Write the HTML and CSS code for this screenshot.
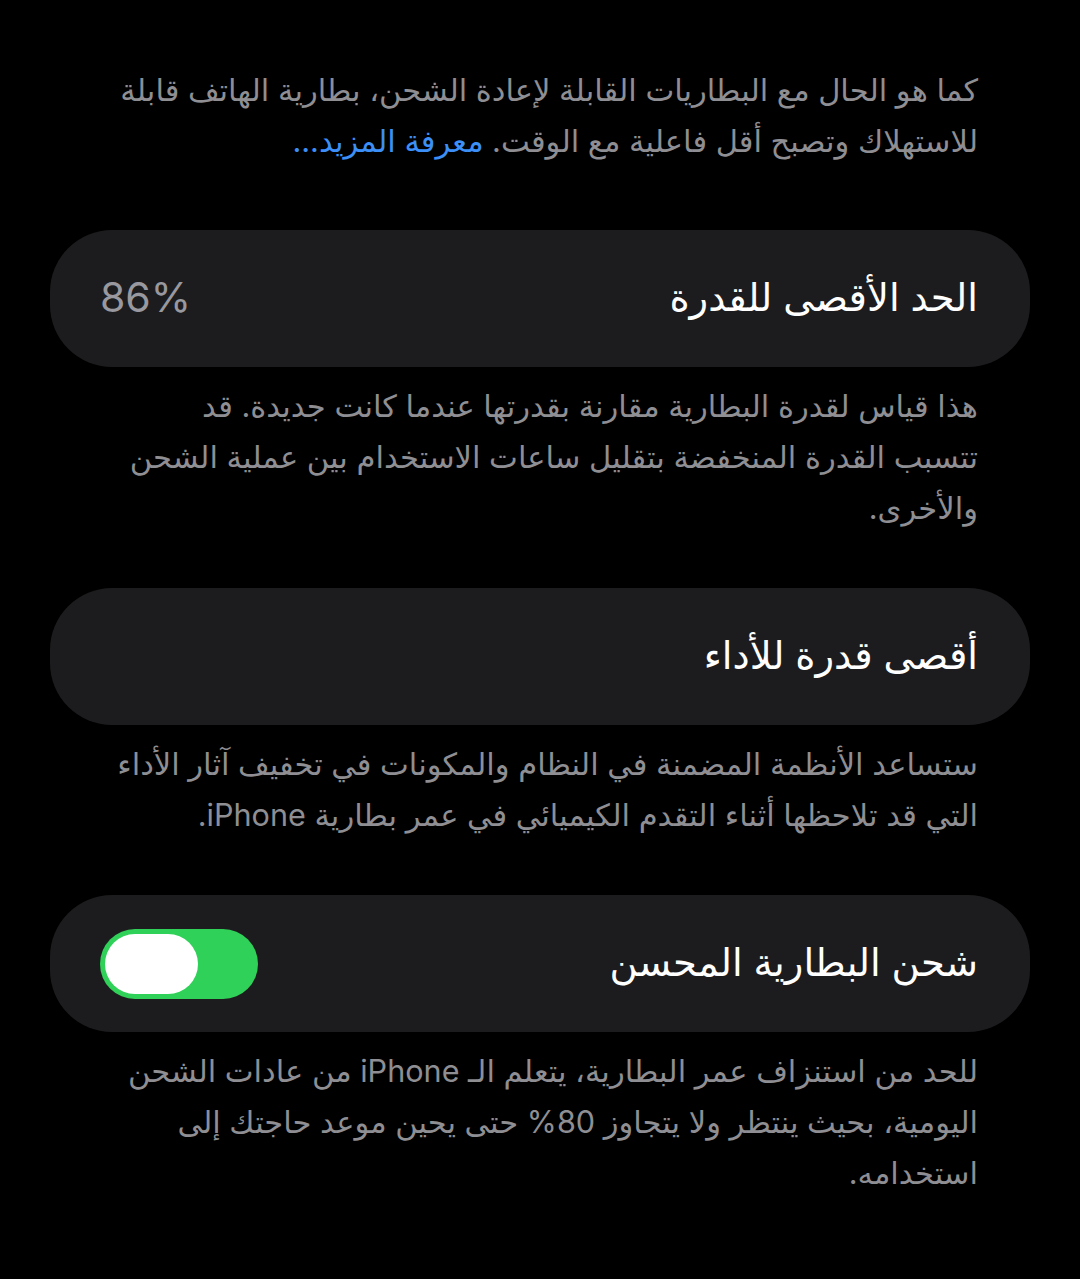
FILE: index.html
```html
<!DOCTYPE html>
<html lang="ar" dir="rtl">
<head>
<meta charset="utf-8">
<link rel="stylesheet" href="styles.css">
</head>
<body>
<main class="page">
  <p class="note note-top">كما هو الحال مع البطاريات القابلة لإعادة الشحن، بطارية الهاتف قابلة<br>للاستهلاك وتصبح أقل فاعلية مع الوقت. <span class="link">معرفة المزيد...</span></p>

  <div class="card">
    <span class="card-title">الحد الأقصى للقدرة</span>
    <span class="card-value">86%</span>
  </div>
  <p class="note">هذا قياس لقدرة البطارية مقارنة بقدرتها عندما كانت جديدة. قد<br>تتسبب القدرة المنخفضة بتقليل ساعات الاستخدام بين عملية الشحن<br>والأخرى.</p>

  <div class="card">
    <span class="card-title">أقصى قدرة للأداء</span>
  </div>
  <p class="note">ستساعد الأنظمة المضمنة في النظام والمكونات في تخفيف آثار الأداء<br>التي قد تلاحظها أثناء التقدم الكيميائي في عمر بطارية iPhone.</p>

  <div class="card">
    <span class="card-title">شحن البطارية المحسن</span>
    <span class="toggle"><span class="knob"></span></span>
  </div>
  <p class="note">للحد من استنزاف عمر البطارية، يتعلم الـ iPhone من عادات الشحن<br>اليومية، بحيث ينتظر ولا يتجاوز 80% حتى يحين موعد حاجتك إلى<br>استخدامه.</p>
</main>
</body>
</html>
```

FILE: styles.css
```css
html, body {
  margin: 0;
  padding: 0;
  background: #000;
}
body {
  font-family: "Inter", "DejaVu Sans", sans-serif;
  direction: rtl;
  width: 1080px;
  height: 1279px;
  overflow: hidden;
}
.page {
  padding: 64px 50px 0 50px;
  display: flex;
  flex-direction: column;
}
.note {
  margin: 13px -50px 55px -50px;
  padding: 0 102px 0 52px;
  color: #8e8e93;
  font-size: 30.6px;
  line-height: 51px;
  white-space: nowrap;
}
.note-top {
  margin-top: 0;
  margin-bottom: 64px;
}
.link {
  color: #3b8ff7;
}
.card {
  background: #1c1c1e;
  border-radius: 62px;
  height: 137px;
  display: flex;
  align-items: center;
  justify-content: space-between;
  padding: 0 52px 0 50px;
  box-sizing: border-box;
}
.card-title {
  color: #fff;
  font-size: 38.5px;
  margin-top: -4px;
}
.card-value {
  color: #98989e;
  font-size: 41px;
  direction: ltr;
  margin-top: -4px;
}
.toggle {
  width: 158px;
  height: 70px;
  border-radius: 35px;
  background: #30d158;
  display: flex;
  align-items: center;
  padding: 0 5px;
  box-sizing: border-box;
  direction: ltr;
}
.knob {
  width: 93px;
  height: 60px;
  border-radius: 30px;
  background: #fff;
}
```
